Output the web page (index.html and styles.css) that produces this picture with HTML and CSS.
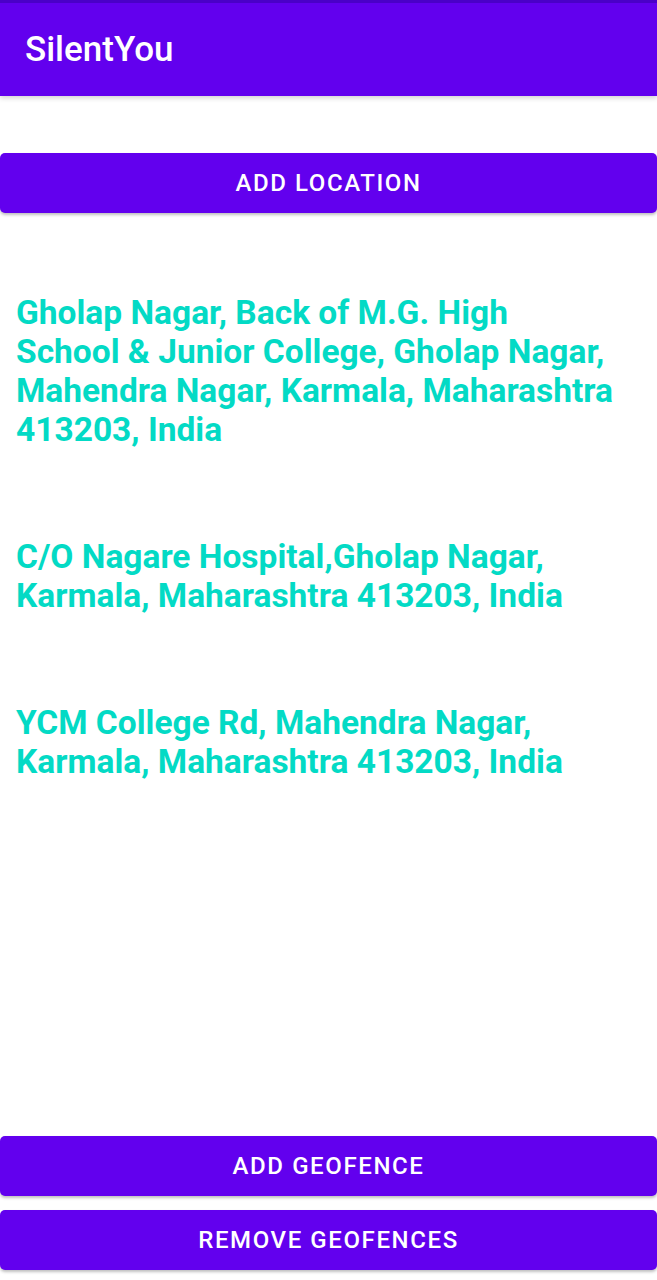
FILE: index.html
```html
<!DOCTYPE html>
<html>
<head>
<meta charset="utf-8">
<link rel="stylesheet" href="styles.css">
</head>
<body>
<div class="screen">
  <header class="appbar"><span class="title">SilentYou</span></header>
  <main class="content">
    <button class="btn btn-top">ADD LOCATION</button>
    <ul class="places">
      <li>Gholap Nagar, Back of M.G. High School &amp; Junior College, Gholap Nagar, Mahendra Nagar, Karmala, Maharashtra 413203, India</li>
      <li>C/O Nagare Hospital,Gholap Nagar, Karmala, Maharashtra 413203, India</li>
      <li>YCM College Rd, Mahendra Nagar, Karmala, Maharashtra 413203, India</li>
    </ul>
  </main>
  <footer class="actions">
    <button class="btn">ADD GEOFENCE</button>
    <button class="btn">REMOVE GEOFENCES</button>
  </footer>
</div>
</body>
</html>
```
FILE: styles.css
```css
html, body {
  margin: 0;
  padding: 0;
  background: #ffffff;
}
body {
  font-family: Roboto, "Liberation Sans", sans-serif;
}
.screen {
  min-height: 1280px;
  display: flex;
  flex-direction: column;
}
.appbar {
  height: 93px;
  background: #6200EE;
  border-top: 3px solid #4a00c8;
  display: flex;
  align-items: center;
  padding-left: 25px;
  box-shadow: 0 2px 5px rgba(0,0,0,0.18);
  position: relative;
  z-index: 1;
}
.title {
  color: #ffffff;
  font-size: 35px;
  font-weight: 500;
  margin-top: -1px;
}
.content {
  flex: 1;
  padding-top: 57px;
}
.btn {
  display: block;
  width: 100%;
  height: 60px;
  border: none;
  border-radius: 5px;
  background: #6200EE;
  color: #ffffff;
  font-family: Roboto, "Liberation Sans", sans-serif;
  font-size: 24px;
  font-weight: 500;
  letter-spacing: 1.6px;
  box-shadow: 0 2px 3px rgba(0,0,0,0.25);
  padding: 0;
}
.places {
  list-style: none;
  margin: 0;
  padding: 80px 16px 0 16px;
  display: flex;
  flex-direction: column;
  gap: 88px;
  width: 599px;
}
.places li {
  color: #03DAC5;
  font-size: 33.5px;
  font-weight: 700;
  line-height: 39px;
}
.actions {
  display: flex;
  flex-direction: column;
  gap: 14px;
  padding-bottom: 10px;
}
```
